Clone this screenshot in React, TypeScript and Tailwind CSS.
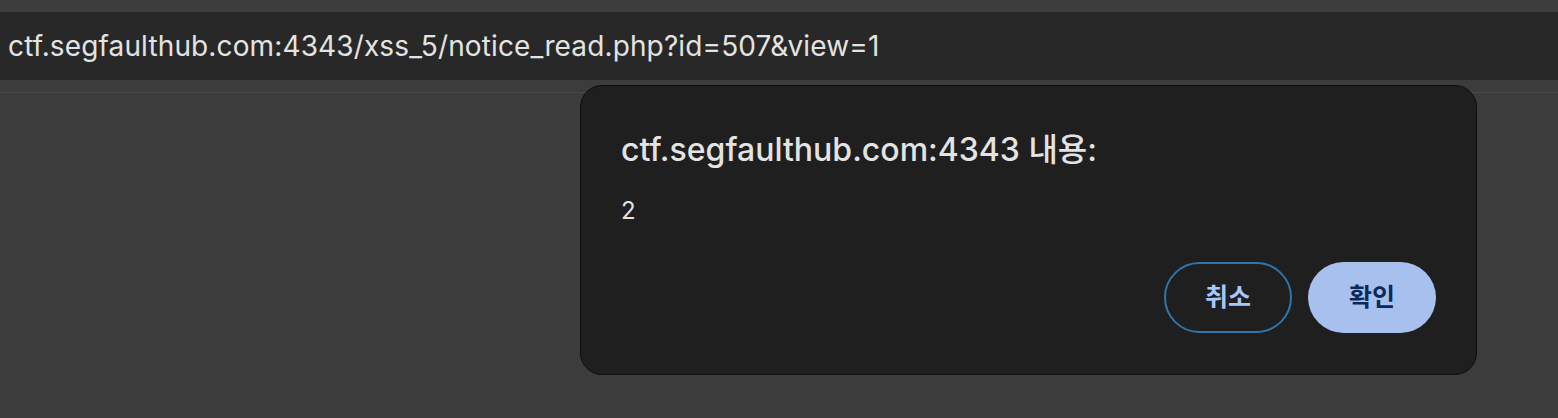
import React from 'react';

const font = { fontFamily: 'Inter, "Noto Sans CJK KR", sans-serif' };

const App: React.FC = () => (
  <div className="relative h-[418px] w-full overflow-hidden bg-[#3c3c3c]" style={font}>
    <div className="h-[12px] bg-[#3d3d3d]" />
    <div className="flex h-[68px] items-center bg-[#282828] px-[8px]">
      <span className="text-[28px] leading-none tracking-[0.13px] text-[#e3e3e3]">
        ctf.segfaulthub.com:4343/xss_5/notice_read.php?id=507&amp;view=1
      </span>
    </div>
    <div className="h-[12px] bg-[#3c3c3c]" />
    <div className="h-[1px] bg-[#4a4a4a]" />

    <div className="absolute left-[580px] top-[85px] flex h-[290px] w-[897px] flex-col rounded-[22px] border border-[#0e0e0e] bg-[#1f1f1f] px-[40px] pt-[44px] pb-[41px]">
      <h1 className="text-[32px] font-medium leading-[40px] text-[#e3e3e3]">
        ctf.segfaulthub.com:4343 내용:
      </h1>
      <p className="mt-[25px] text-[24px] leading-[32px] text-[#e3e3e3]">2</p>
      <div className="mt-auto flex justify-end gap-[16px]">
        <button className="flex h-[71px] w-[128px] items-center justify-center rounded-full border-2 border-[#2f75ab] text-[25px] font-semibold text-[#a8c7fa]">
          취소
        </button>
        <button className="flex h-[71px] w-[128px] items-center justify-center rounded-full bg-[#a8c0ed] text-[25px] font-semibold text-[#0a2a5c]">
          확인
        </button>
      </div>
    </div>
  </div>
);

export default App;
